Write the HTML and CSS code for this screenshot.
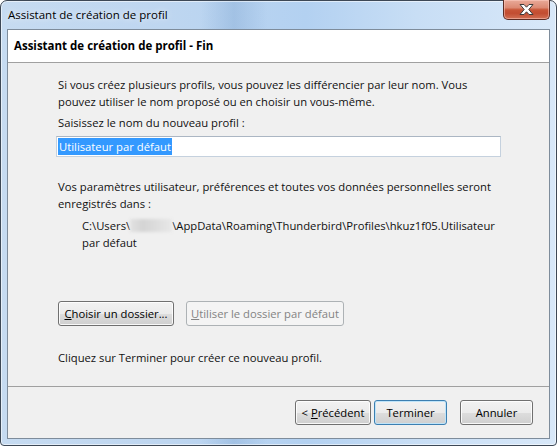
FILE: index.html
```html
<!DOCTYPE html>
<html lang="fr">
<head>
<meta charset="utf-8">
<title>Assistant de création de profil</title>
<link rel="stylesheet" href="styles.css">
</head>
<body>
<div class="window">
  <div class="titlebar">
    <span class="title">Assistant de création de profil</span>
    <div class="close">
      <svg width="15" height="11" viewBox="0 0 15 11">
        <path d="M1 0.5 H5 L7.5 3.2 L10 0.5 H14 L9.8 5.5 L14 10.5 H10 L7.5 7.8 L5 10.5 H1 L5.2 5.5 Z" fill="#fff" stroke="#3b3b3b" stroke-width="1" stroke-linejoin="round"/>
      </svg>
    </div>
  </div>
  <div class="client">
    <div class="header">Assistant de création de profil - Fin</div>
    <div class="content">
      <p class="text">Si vous créez plusieurs profils, vous pouvez les différencier par leur nom. Vous<br>pouvez utiliser le nom proposé ou en choisir un vous-même.</p>
      <p class="text label">Saisissez le nom du nouveau profil :</p>
      <div class="textbox"><span class="sel">Utilisateur par défaut</span></div>
      <p class="text info">Vos paramètres utilisateur, préférences et toutes vos données personnelles seront<br>enregistrés dans :</p>
      <p class="text path">C:\Users\<span class="blur"></span>\AppData\Roaming\Thunderbird\Profiles\hkuz1f05.Utilisateur<br>par défaut</p>
      <div class="folder-buttons">
        <button class="btn choose"><u>C</u>hoisir un dossier...</button>
        <button class="btn disabled"><u>U</u>tiliser le dossier par défaut</button>
      </div>
      <p class="text finish">Cliquez sur Terminer pour créer ce nouveau profil.</p>
    </div>
    <div class="footer">
      <button class="btn nav">&lt; <u>P</u>récédent</button>
      <button class="btn nav default">Terminer</button>
      <button class="btn nav cancel">Annuler</button>
    </div>
  </div>
</div>
</body>
</html>
```
FILE: styles.css
```css
html, body {
  margin: 0;
  padding: 0;
  width: 557px;
  height: 446px;
  overflow: hidden;
  background: #ffffff;
}
body {
  font-family: "Open Sans", "Noto Sans", sans-serif;
  font-size: 11.25px;
  color: #000;
}
.window {
  box-sizing: border-box;
  width: 557px;
  height: 446px;
  border: 1px solid #3d4856;
  border-radius: 7px 7px 4px 4px;
  padding: 0 6px 6px 6px;
  display: flex;
  flex-direction: column;
  background:
    linear-gradient(90deg, rgba(255,255,255,0) 0%, rgba(255,255,255,0) 36%, rgba(120,160,205,0.35) 42%, rgba(255,255,255,0) 48%, rgba(255,255,255,0) 100%),
    linear-gradient(90deg, #c6dbf1 0%, #bed6f0 30%, #b3d1f1 55%, #c8def5 75%, #d8e8f9 100%);
  box-shadow: inset 0 0 0 1px rgba(255,255,255,0.55);
}
.titlebar {
  height: 28px;
  display: flex;
  justify-content: space-between;
  align-items: flex-start;
  margin: 0 -6px 0 -6px;
  padding: 0 6px 0 7px;
}
.title {
  margin-top: 6px;
  font-size: 11.5px;
  line-height: 16px;
  color: #000;
  text-shadow: 0 0 6px rgba(255,255,255,0.9);
}
.close {
  width: 45px;
  height: 19px;
  margin-top: -1px;
  border: 1px solid #5b2c24;
  border-top: none;
  border-radius: 0 0 5px 5px;
  background: linear-gradient(#e9aa99 0%, #dc8a74 40%, #c85537 52%, #c24d31 70%, #d27054 100%);
  box-shadow: inset 0 0 0 1px rgba(255,210,200,0.5);
  display: flex;
  align-items: center;
  justify-content: center;
}
.client {
  flex: 1;
  display: flex;
  flex-direction: column;
  border: 1px solid #7e8c9b;
  background: #f0f0f0;
}
.header {
  height: 32px;
  background: #ffffff;
  border-bottom: 1px solid #a0a0a0;
  padding-left: 6px;
  font-weight: 700;
  font-size: 11.5px;
  line-height: 31px;
}
.content {
  flex: 1;
  padding: 13px 0 0 50px;
  display: flex;
  flex-direction: column;
  align-items: flex-start;
}
.text {
  margin: 0;
  line-height: 17px;
  white-space: nowrap;
  color: #111;
}
.label {
  margin-top: 4px;
}
.textbox {
  box-sizing: border-box;
  margin: 5px 0 0 -2px;
  width: 445px;
  height: 21px;
  background: #fff;
  border: 1px solid #c5d1de;
  border-top-color: #abb6c3;
  padding: 1px 0 0 1px;
  line-height: 17px;
}
.sel {
  display: inline-block;
  background: #3399ff;
  color: #fff;
  padding: 0 1px;
  height: 17px;
}
.info {
  margin-top: 21px;
}
.path {
  margin-top: 5px;
  margin-left: 24px;
}
.blur {
  display: inline-block;
  width: 42px;
  height: 13px;
  vertical-align: -2px;
  background: linear-gradient(90deg, #e2e2e2, #d4d4d4 30%, #dcdcdc 60%, #e8e8e8);
  filter: blur(1.5px);
}
.folder-buttons {
  margin-top: 50px;
  display: flex;
  gap: 12px;
}
.btn {
  box-sizing: border-box;
  height: 25px;
  font-family: inherit;
  font-size: 11.25px;
  color: #000;
  border: 1px solid #707070;
  border-radius: 3px;
  background: linear-gradient(#f2f2f2 0%, #ebebeb 50%, #dddddd 51%, #cfcfcf 100%);
  box-shadow: inset 0 0 0 1px rgba(255,255,255,0.85);
  padding: 0 4px;
  line-height: 21px;
}
.choose {
  width: 116px;
}
.disabled {
  width: 158px;
  color: #838383;
  border-color: #adb2b5;
  background: #f4f4f4;
  box-shadow: none;
}
.finish {
  margin-top: 23px;
}
.footer {
  height: 52px;
  border-top: 1px solid #a0a0a0;
  box-sizing: border-box;
  padding: 13px 16px 0 0;
  display: flex;
  justify-content: flex-end;
  align-items: flex-start;
}
.nav {
  width: 76px;
}
.default {
  width: 73px;
  margin-left: 3px;
  border-color: #3c7fb1;
  box-shadow: inset 0 0 0 1px #bfe4f9;
}
.cancel {
  width: 73px;
  margin-left: 13px;
}
```
